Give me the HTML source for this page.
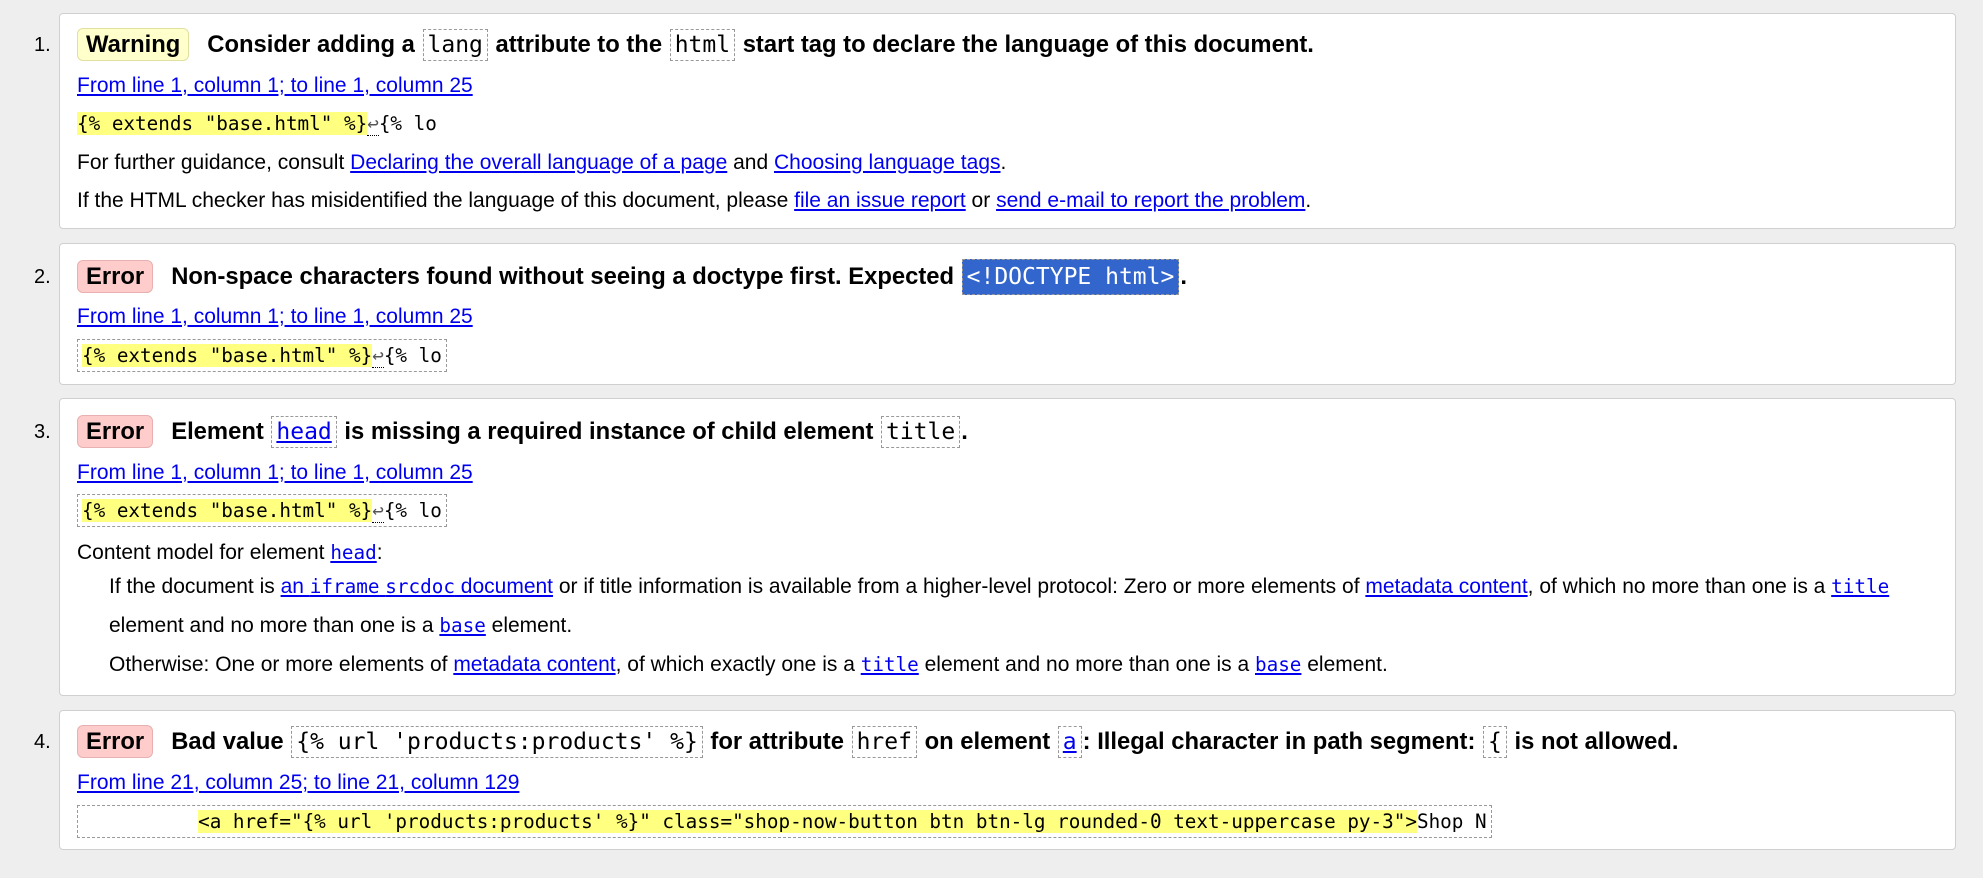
<!DOCTYPE html>
<html><head><style>
body{margin:0;background:#eeeeee;font-family:"Liberation Sans",Arial,sans-serif;color:#000;width:1983px;height:878px;overflow:hidden;position:relative}
.card{position:absolute;left:59px;width:1897px;background:#fff;border:1px solid #d0d0d0;border-radius:4px;box-sizing:border-box}
.num{position:absolute;left:-26px;font-size:20px;line-height:38px;top:0}
.l{position:absolute;left:17px;height:38px;line-height:38px;font-size:21px;white-space:nowrap}
.t{font-size:23.8px;font-weight:bold;height:40px;line-height:40px}
.badge{display:inline-block;border-radius:6px;padding:0 8px;height:31px;line-height:31px;margin-right:18px;vertical-align:middle;position:relative;top:-1px}
.warn{background:#ffffcc;border:1px solid #e0e0a0}
.err{background:#ffcccc;border:1px solid #e8b0b0}
code{font-family:"DejaVu Sans Mono","Liberation Mono",monospace}
.l code{font-size:19.3px}
.l.t code{font-weight:normal;font-size:23px;border:1px dashed #999;padding:2px 4px;margin:0 1px}
a{color:#0000ee;text-decoration:underline}
.hl{background:#ffff80}
.box{border:1px dashed #999;padding:4px 4px}
.ret{border-bottom:1px dotted #000;color:#555}
.l.t code.dt{background:#3366cc;color:#fff;padding:4px 4px}
.ind{left:49px}
</style></head><body>

<div class="card" style="top:13px;height:216px">
<div class="num" style="top:12px">1.</div>
<div class="l t" style="top:11px"><span class="badge warn">Warning</span>Consider adding a <code>lang</code> attribute to the <code>html</code> start tag to declare the language of this document.</div>
<div class="l" style="top:53px"><a>From line 1, column 1; to line 1, column 25</a></div>
<div class="l" style="top:91px"><code><span class="hl">{% extends "base.html" %}</span><span class="ret">↩</span>{% lo</code></div>
<div class="l" style="top:130px">For further guidance, consult <a>Declaring the overall language of a page</a> and <a>Choosing language tags</a>.</div>
<div class="l" style="top:168px">If the HTML checker has misidentified the language of this document, please <a>file an issue report</a> or <a>send e-mail to report the problem</a>.</div>
</div>

<div class="card" style="top:243px;height:142px">
<div class="num" style="top:14px">2.</div>
<div class="l t" style="top:13px"><span class="badge err">Error</span>Non-space characters found without seeing a doctype first. Expected <code class="dt">&lt;!DOCTYPE html&gt;</code>.</div>
<div class="l" style="top:54px"><a>From line 1, column 1; to line 1, column 25</a></div>
<div class="l" style="top:93px"><code class="box"><span class="hl">{% extends "base.html" %}</span><span class="ret">↩</span>{% lo</code></div>
</div>

<div class="card" style="top:398px;height:298px">
<div class="num" style="top:14px">3.</div>
<div class="l t" style="top:13px"><span class="badge err">Error</span>Element <code><a>head</a></code> is missing a required instance of child element <code>title</code>.</div>
<div class="l" style="top:55px"><a>From line 1, column 1; to line 1, column 25</a></div>
<div class="l" style="top:93px"><code class="box"><span class="hl">{% extends "base.html" %}</span><span class="ret">↩</span>{% lo</code></div>
<div class="l" style="top:135px">Content model for element <a><code>head</code></a>:</div>
<div class="l ind" style="top:169px">If the document is <a>an <code>iframe</code> <code>srcdoc</code> document</a> or if title information is available from a higher-level protocol: Zero or more elements of <a>metadata content</a>, of which no more than one is a <a><code>title</code></a></div>
<div class="l ind" style="top:208px">element and no more than one is a <a><code>base</code></a> element.</div>
<div class="l ind" style="top:247px">Otherwise: One or more elements of <a>metadata content</a>, of which exactly one is a <a><code>title</code></a> element and no more than one is a <a><code>base</code></a> element.</div>
</div>

<div class="card" style="top:710px;height:140px">
<div class="num" style="top:12px">4.</div>
<div class="l t" style="top:11px"><span class="badge err">Error</span>Bad value <code>{% url 'products:products' %}</code> for attribute <code>href</code> on element <code><a>a</a></code>: Illegal character in path segment: <code>{</code> is not allowed.</div>
<div class="l" style="top:53px"><a>From line 21, column 25; to line 21, column 129</a></div>
<div class="l" style="top:92px"><code class="box" style="white-space:pre">          <span class="hl">&lt;a href="{% url 'products:products' %}" class="shop-now-button btn btn-lg rounded-0 text-uppercase py-3"&gt;</span>Shop N</code></div>
</div>

</body></html>
